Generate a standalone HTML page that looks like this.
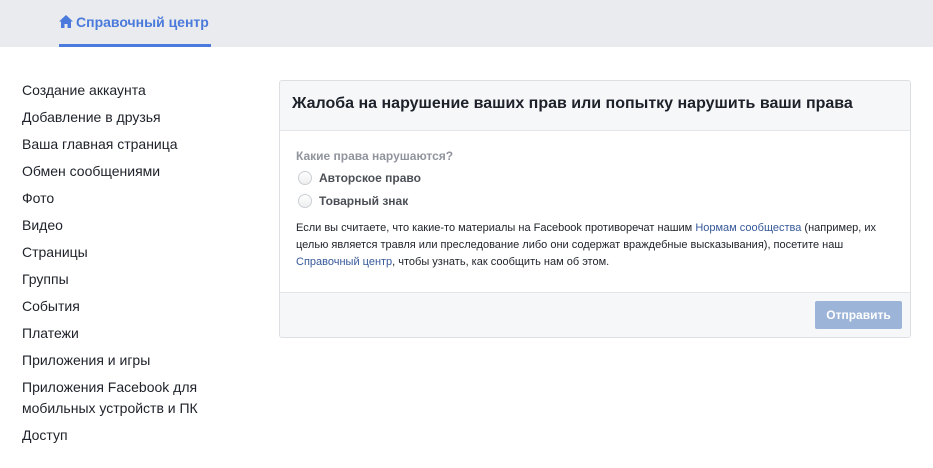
<!DOCTYPE html>
<html><head><meta charset="utf-8"><style>
body{margin:0;width:933px;height:468px;background:#fff;font-family:"Liberation Sans",Arial,sans-serif;position:relative;overflow:hidden;color:#1d2129}
.hdr{position:absolute;left:0;top:0;width:933px;height:47px;background:#e9ebee}
.tab{position:absolute;left:59px;top:14px;font-size:14px;font-weight:bold;color:#4a7adb}
.tab svg{vertical-align:-1px;margin-right:3px}
.ul{position:absolute;left:59px;top:44px;width:152px;height:3px;background:#4a7adb}
.side{position:absolute;left:22px;top:77px;font-size:14px;line-height:27px;color:#1d2129}
.side div.two{line-height:21px;padding:3px 0}
.card{position:absolute;left:279px;top:80px;width:630px;height:256px;border:1px solid #dddfe2;border-radius:3px;overflow:hidden}
.ch{height:49px;background:#f6f7f9;border-bottom:1px solid #e5e5e5;font-size:16px;font-weight:bold;line-height:46px;padding-left:12px;color:#1d2129}
.body{padding:18px 16px 0 16px;height:143px;position:relative}
.q{font-size:12px;font-weight:bold;color:#90949c}
.r{font-size:12px;font-weight:bold;color:#4b4f56;margin-top:8px;height:15px;line-height:15px}
.r span{display:inline-block;width:12px;height:12px;border:1px solid #ccd0d5;border-radius:50%;background:linear-gradient(#fff,#eee);vertical-align:-3px;margin:0 7px 0 2px}
.p{font-size:11px;line-height:17px;color:#1d2129;margin-top:11px}
.p a{color:#365899;text-decoration:none}
.foot{position:absolute;left:0;top:211px;width:630px;height:45px;background:#f6f7f9;border-top:1px solid #e5e5e5}
.btn{position:absolute;right:8px;top:8px;width:87px;height:28px;background:#9cb4d8;border-radius:2px;color:#fff;font-size:12px;font-weight:bold;text-align:center;line-height:28px}
</style></head><body>
<div class="hdr"><div class="tab"><svg width="14" height="13" viewBox="0 0 14 13"><path d="M7 0L0 6.5h2V13h3.5V9h3v4H12V6.5h2z" fill="#4a7adb"/></svg>Справочный центр</div><div class="ul"></div></div>
<div class="side">
<div>Создание аккаунта</div><div>Добавление в друзья</div><div>Ваша главная страница</div><div>Обмен сообщениями</div><div>Фото</div><div>Видео</div><div>Страницы</div><div>Группы</div><div>События</div><div>Платежи</div><div>Приложения и игры</div><div class="two">Приложения Facebook для<br>мобильных устройств и ПК</div><div>Доступ</div>
</div>
<div class="card">
<div class="ch">Жалоба на нарушение ваших прав или попытку нарушить ваши права</div>
<div class="body">
<div class="q">Какие права нарушаются?</div>
<div class="r"><span></span>Авторское право</div>
<div class="r"><span></span>Товарный знак</div>
<div class="p">Если вы считаете, что какие-то материалы на Facebook противоречат нашим <a>Нормам сообщества</a> (например, их целью является травля или преследование либо они содержат враждебные высказывания), посетите наш <a>Справочный центр</a>, чтобы узнать, как сообщить нам об этом.</div>
</div>
<div class="foot"><div class="btn">Отправить</div></div>
</div>
</body></html>
